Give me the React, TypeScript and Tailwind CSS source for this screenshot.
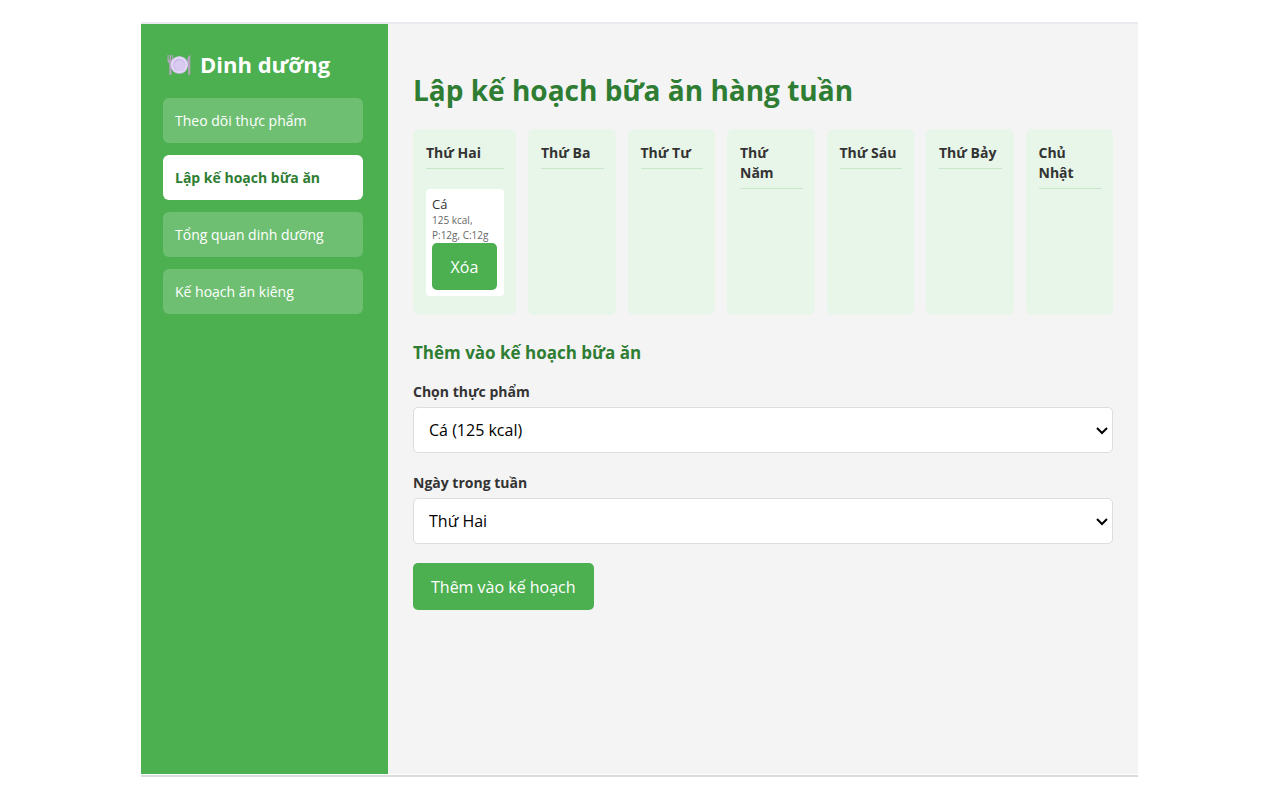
import { useState } from 'react';

const navItems = [
  'Theo dõi thực phẩm',
  'Lập kế hoạch bữa ăn',
  'Tổng quan dinh dưỡng',
  'Kế hoạch ăn kiêng',
];

const days = ['Thứ Hai', 'Thứ Ba', 'Thứ Tư', 'Thứ Năm', 'Thứ Sáu', 'Thứ Bảy', 'Chủ Nhật'];

function PlateIcon() {
  return (
    <svg viewBox="0 0 24 24" className="size-6 shrink-0" aria-hidden="true">
      <path
        d="M.5 3v5.5c0 1.3.8 2.2 1.7 2.6L2.3 22c0 1.3 2.2 1.3 2.2 0l.1-10.9c1-.4 1.7-1.3 1.7-2.6V3H5.2v4.400h-1V3H2.700v4.400h-1V3z"
        fill="#b3a3bd"
      />
      <path d="M23.3 3c-2 .4-3 3-3 6v5h.8v8c0 1.3 2.2 1.3 2.2 0z" fill="#b3a3bd" />
      <circle cx="12.3" cy="13" r="8.8" fill="#cfc0ea" />
      <circle cx="12.3" cy="12.8" r="8.3" fill="#e2d6f6" />
      <circle cx="12.3" cy="13" r="6" fill="#c3b1e3" />
      <circle cx="12.6" cy="13.4" r="5.5" fill="#d8caf1" />
    </svg>
  );
}

function Sidebar() {
  return (
    <aside className="w-[247px] shrink-0 bg-[#4caf50] pt-6 pr-[25px] pl-[22px]">
      <h2 className="flex items-center gap-[9px] pl-1 text-[22px] leading-8 font-bold text-white">
        <PlateIcon />
        Dinh dưỡng
      </h2>
      <nav className="mt-[18px] flex flex-col gap-3">
        {navItems.map((item, i) => (
          <button
            key={item}
            type="button"
            className={
              i === 1
                ? 'h-[45px] rounded-md bg-white px-3 text-left text-sm font-bold text-[#2e7d32]'
                : 'h-[45px] rounded-md bg-white/20 px-3 text-left text-sm text-white'
            }
          >
            {item}
          </button>
        ))}
      </nav>
    </aside>
  );
}

function DayColumn({ day, index }: { day: string; index: number }) {
  return (
    <section className="rounded-md bg-[#e8f5e9] pt-[14px] pr-3 pb-[19px] pl-[13px]">
      <h3 className="border-b border-[#c8e6c9] pb-[5px] text-sm leading-5 font-bold text-[#333]">{day}</h3>
      {index === 0 && (
        <div className="mt-5 rounded bg-white p-[6px] text-[#333]">
          <div className="text-[13px] leading-[18px]">Cá</div>
          <div className="text-[10px] leading-[15px] text-[#666]">
            125 kcal,
            <br />
            P:12g, C:12g
          </div>
          <button type="button" className="h-[47px] w-[65px] rounded-[5px] bg-[#4caf50] text-base text-white">
            Xóa
          </button>
        </div>
      )}
    </section>
  );
}

interface FieldProps {
  id: string;
  label: string;
  options: string[];
}

function SelectField({ id, label, options }: FieldProps) {
  const [value, setValue] = useState(options[0]);
  return (
    <div className="flex flex-col gap-[5px]">
      <label htmlFor={id} className="text-sm leading-[21px] font-bold text-[#333]">
        {label}
      </label>
      <div className="grid items-center">
        <select
          id={id}
          value={value}
          onChange={(e) => setValue(e.target.value)}
          className="col-start-1 row-start-1 h-[46px] w-full appearance-none rounded-[5px] border border-[#ddd] bg-white px-[15px] text-base text-black"
        >
          {options.map((o) => (
            <option key={o}>{o}</option>
          ))}
        </select>
        <svg
          viewBox="0 0 12 8"
          className="pointer-events-none col-start-1 row-start-1 mt-0.5 mr-[5px] h-2 w-3 justify-self-end"
          fill="none"
          stroke="#000"
          strokeWidth="2"
          aria-hidden="true"
        >
          <path d="M1 1l5 5 5-5" />
        </svg>
      </div>
    </div>
  );
}

export default function App() {
  return (
    <div className="flex min-h-screen bg-white pt-[22px] pr-[142px] pb-[23px] pl-[141px] font-['Open_Sans','Noto_Sans',sans-serif]">
      <div className="flex flex-1 flex-col border-t border-b-2 border-t-[#e6e9f5] border-b-[#d9dcda]">
        <div className="flex flex-1 border-t border-b border-t-[#ebebeb] border-b-white">
          <Sidebar />
          <main className="min-w-0 flex-1 bg-[#f4f4f4] pt-[45px] px-[25px]">
            <h1 className="text-[28px] leading-[42px] font-bold text-[#2e7d32]">Lập kế hoạch bữa ăn hàng tuần</h1>
            <div className="mt-[18px] grid grid-cols-[103px_repeat(6,minmax(0,1fr))] gap-3">
              {days.map((day, i) => (
                <DayColumn key={day} day={day} index={i} />
              ))}
            </div>
            <h2 className="mt-[26px] text-[17px] leading-6 font-bold text-[#2e7d32]">Thêm vào kế hoạch bữa ăn</h2>
            <form className="mt-4 flex flex-col gap-[19px]" onSubmit={(e) => e.preventDefault()}>
              <SelectField id="food" label="Chọn thực phẩm" options={['Cá (125 kcal)']} />
              <SelectField id="day" label="Ngày trong tuần" options={days} />
              <button
                type="submit"
                className="h-[47px] self-start rounded-[5px] bg-[#4caf50] px-[18px] text-base text-white"
              >
                Thêm vào kế hoạch
              </button>
            </form>
          </main>
        </div>
      </div>
    </div>
  );
}
